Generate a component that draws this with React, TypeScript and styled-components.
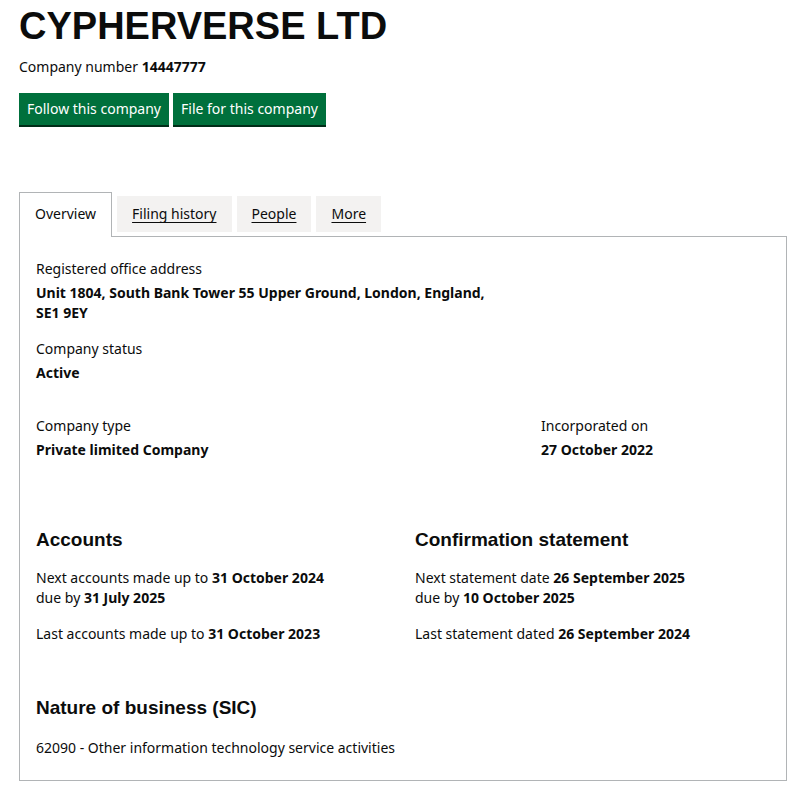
import React from "react";
import styled, { createGlobalStyle } from "styled-components";

const GlobalStyle = createGlobalStyle`
  body {
    margin: 0;
    background: #ffffff;
    color: #0b0c0c;
    font-family: "Noto Sans", Arial, sans-serif;
  }
`;

const Page = styled.div`
  width: 768px;
  padding: 6px 0 10px 19px;
`;

const Title = styled.h1`
  margin: 0;
  font-family: "Liberation Sans", Arial, sans-serif;
  font-size: 38px;
  font-weight: 700;
  line-height: 40px;
`;

const CompanyNumber = styled.p`
  margin: 11px 0 0;
  font-size: 14px;
  line-height: 20px;

  strong {
    font-weight: 700;
  }
`;

const Actions = styled.div`
  display: flex;
  gap: 4px;
  margin-top: 16px;
`;

const Button = styled.button`
  font-family: "Noto Sans", Arial, sans-serif;
  font-size: 14px;
  line-height: 20px;
  color: #ffffff;
  background: #00703c;
  border: 0;
  box-shadow: 0 2px 0 #002d18;
  padding: 6px 8px;
  height: 32px;
  cursor: pointer;
`;

const Tabs = styled.div`
  display: flex;
  align-items: flex-end;
  gap: 5px;
  margin-top: 67px;
`;

const Tab = styled.a<{ $active?: boolean }>`
  display: block;
  font-size: 14px;
  line-height: 20px;
  color: #0b0c0c;
  cursor: pointer;
  text-decoration: ${(p) => (p.$active ? "none" : "underline")};
  text-underline-offset: 3px;
  background: ${(p) => (p.$active ? "#ffffff" : "#f3f2f1")};
  border: ${(p) => (p.$active ? "1px solid #b1b4b6" : "0")};
  border-bottom: 0;
  padding: ${(p) => (p.$active ? "11px 15px 13px" : "8px 15px")};
  margin-bottom: ${(p) => (p.$active ? "-1px" : "4px")};
  position: relative;
  z-index: 1;
`;

const Panel = styled.section`
  border: 1px solid #b1b4b6;
  padding: 22px 0 22px 16px;
`;

const Row = styled.div<{ $cols: string; $top?: number; $bottom?: number }>`
  display: grid;
  grid-template-columns: ${(p) => p.$cols};
  margin-top: ${(p) => p.$top ?? 0}px;
  margin-bottom: ${(p) => p.$bottom ?? 16}px;
`;

const Field = styled.dl`
  margin: 0 0 16px;
`;

const Label = styled.dt`
  font-size: 14px;
  line-height: 20px;
  color: #0b0c0c;
  margin-bottom: 4px;
`;

const Value = styled.dd`
  margin: 0;
  font-size: 14px;
  line-height: 20px;
  font-weight: 700;
`;

const Heading = styled.h2`
  margin: 0 0 16px;
  font-family: "Liberation Sans", Arial, sans-serif;
  font-size: 19px;
  line-height: 24px;
  font-weight: 700;
`;

const Text = styled.p`
  margin: 0 0 16px;
  font-size: 14px;
  line-height: 20px;

  strong {
    font-weight: 700;
  }
`;

const Sic = styled.p`
  margin: 18px 0 0;
  font-size: 14px;
  line-height: 20px;
`;

export default function App() {
  return (
    <Page>
      <GlobalStyle />
      <Title>CYPHERVERSE LTD</Title>
      <CompanyNumber>
        Company number <strong>14447777</strong>
      </CompanyNumber>
      <Actions>
        <Button>Follow this company</Button>
        <Button>File for this company</Button>
      </Actions>

      <Tabs>
        <Tab $active>Overview</Tab>
        <Tab>Filing history</Tab>
        <Tab>People</Tab>
        <Tab>More</Tab>
      </Tabs>
      <Panel>
        <Field>
          <Label>Registered office address</Label>
          <Value>
            Unit 1804, South Bank Tower 55 Upper Ground, London, England,
            <br />
            SE1 9EY
          </Value>
        </Field>
        <Field>
          <Label>Company status</Label>
          <Value>Active</Value>
        </Field>

        <Row $cols="505px 1fr" $top={33} $bottom={52}>
          <Field>
            <Label>Company type</Label>
            <Value>Private limited Company</Value>
          </Field>
          <Field>
            <Label>Incorporated on</Label>
            <Value>27 October 2022</Value>
          </Field>
        </Row>

        <Row $cols="379px 1fr" $bottom={36}>
          <div>
            <Heading>Accounts</Heading>
            <Text>
              Next accounts made up to <strong>31 October 2024</strong>
              <br />
              due by <strong>31 July 2025</strong>
            </Text>
            <Text>
              Last accounts made up to <strong>31 October 2023</strong>
            </Text>
          </div>
          <div>
            <Heading>Confirmation statement</Heading>
            <Text>
              Next statement date <strong>26 September 2025</strong>
              <br />
              due by <strong>10 October 2025</strong>
            </Text>
            <Text>
              Last statement dated <strong>26 September 2024</strong>
            </Text>
          </div>
        </Row>

        <Heading>Nature of business (SIC)</Heading>
        <Sic>62090 - Other information technology service activities</Sic>
      </Panel>
    </Page>
  );
}
